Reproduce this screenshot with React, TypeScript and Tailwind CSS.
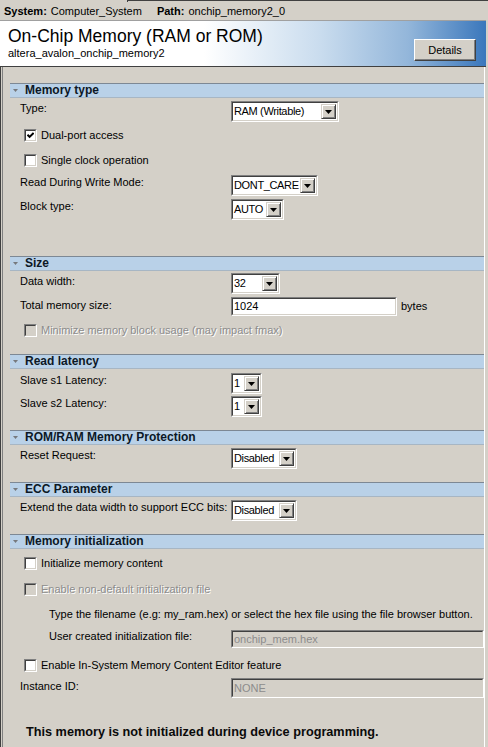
import React from "react";

function DropArrow() {
  return (
    <div className="my-[1px] mr-[1px] flex w-[15px] shrink-0 items-center justify-center border border-t-[#d4d0c8] border-l-[#d4d0c8] border-r-[#404040] border-b-[#404040] bg-[#d4d0c8] shadow-[inset_1px_1px_0_#fff,inset_-1px_-1px_0_#808080]">
      <svg width="7" height="4" viewBox="0 0 7 4">
        <path d="M0 0H7L3.5 4Z" fill="#000" />
      </svg>
    </div>
  );
}

function Select({ value, className }: { value: string; className: string }) {
  return (
    <div className={`flex h-[21px] shrink-0 border border-t-[#808080] border-l-[#808080] border-r-white border-b-white ${className}`}>
      <div className="flex flex-1 border border-t-[#404040] border-l-[#404040] border-r-[#d4d0c8] border-b-[#d4d0c8] bg-white">
        <span className="flex-1 overflow-hidden whitespace-nowrap pl-[1px] text-[11px] leading-[17px] tracking-[-0.35px] text-black">{value}</span>
        <DropArrow />
      </div>
    </div>
  );
}

function TextBox({ value, disabled = false, className }: { value: string; disabled?: boolean; className: string }) {
  return (
    <div className={`flex border border-t-[#808080] border-l-[#808080] border-r-white border-b-white ${className}`}>
      <div
        className={`flex flex-1 items-center border border-t-[#404040] border-l-[#404040] border-r-[#d4d0c8] border-b-[#d4d0c8] pl-[1px] text-[11px] ${
          disabled ? "bg-[#d4d0c8] text-[#8c8c8c]" : "bg-white text-black"
        }`}
      >
        {value}
      </div>
    </div>
  );
}

function Check({ checked = false, disabled = false }: { checked?: boolean; disabled?: boolean }) {
  return (
    <div className="h-[13px] w-[13px] shrink-0 border border-t-[#808080] border-l-[#808080] border-r-white border-b-white">
      <div
        className={`flex h-full w-full items-center justify-center border border-t-[#404040] border-l-[#404040] border-r-[#d4d0c8] border-b-[#d4d0c8] ${
          disabled ? "bg-[#d4d0c8]" : "bg-white"
        }`}
      >
        {checked && (
          <svg width="7" height="7" viewBox="0 0 7 7">
            <path d="M0.5 2.8L2.6 4.9L6.6 0.9" stroke="#000" strokeWidth="2" fill="none" />
          </svg>
        )}
      </div>
    </div>
  );
}

function CheckRow({ label, checked, disabled, className }: { label: string; checked?: boolean; disabled?: boolean; className: string }) {
  return (
    <div className={`flex h-[13px] items-center pl-[21px] ${className}`}>
      <Check checked={checked} disabled={disabled} />
      <span
        className={`ml-[4px] whitespace-nowrap leading-[13px] ${
          disabled ? "text-[#8c8c8c] [text-shadow:1px_1px_0_#fff]" : "text-black"
        }`}
      >
        {label}
      </span>
    </div>
  );
}

function Section({ title, className }: { title: string; className: string }) {
  return (
    <div className={`ml-[7px] flex h-[15px] shrink-0 items-center border-t border-b border-t-[#7d8894] border-b-[#a7b6c4] bg-[#b9d1e8] ${className}`}>
      <svg className="ml-[3px]" width="5" height="3" viewBox="0 0 5 3">
        <path d="M0 0H5L2.5 3Z" fill="#76797d" />
      </svg>
      <span className="ml-[7px] text-[12px] font-bold leading-[13px] text-[#0c1826]">{title}</span>
    </div>
  );
}

function Row({ label, children, className, lead = "leading-[14px]" }: { label: string; children: React.ReactNode; className: string; lead?: string }) {
  return (
    <div className={`flex pl-[17px] ${className}`}>
      <span className={`w-[211px] shrink-0 whitespace-nowrap ${lead}`}>{label}</span>
      {children}
    </div>
  );
}

export default function App() {
  return (
    <div className="flex h-[747px] w-[488px] flex-col overflow-hidden bg-[#d4d0c8] font-['Liberation_Sans',Arial,sans-serif] text-[11px] text-black">
      {/* top path bar */}
      <div className="flex h-[2px] shrink-0">
        <div className="w-[127px]" />
        <div className="flex-1 border-t border-l border-[#404040]" />
      </div>
      <div className="flex h-[18px] shrink-0 items-center pl-[4px] pt-[1px] leading-[13px]">
        <span className="font-bold">System:</span>
        <span className="ml-[4px]">Computer_System</span>
        <span className="ml-[15px] font-bold">Path:</span>
        <span className="ml-[4px]">onchip_memory2_0</span>
      </div>

      {/* header */}
      <div className="mr-[2px] flex h-[47px] shrink-0 justify-between border-t border-b border-t-[#a0a0a0] border-b-[#404040] bg-[linear-gradient(to_right,#ffffff_0%,#ffffff_42%,#c9dcee_66%,#93b6da_84%,#3a77bc_100%)]">
        <div className="flex flex-col pl-[8px] pt-[5px]">
          <span className="text-[17.5px] leading-[21px] text-black">On-Chip Memory (RAM or ROM)</span>
          <span className="text-[11px] leading-[13px] text-black">altera_avalon_onchip_memory2</span>
        </div>
        <div className="mb-[5px] mr-[10px] flex h-[22px] w-[62px] items-center justify-center self-end border border-t-white border-l-white border-r-[#404040] border-b-[#404040] bg-[#d4d0c8] shadow-[inset_-1px_-1px_0_#808080] text-[11px]">
          Details
        </div>
      </div>

      {/* body */}
      <div className="mr-[3px] flex flex-1 border-l border-[#404040] pl-[1px]">
        <div className="flex flex-1 flex-col border-l border-r border-l-[#808080] border-r-white pt-[16px]">
          <Section title="Memory type" className="" />
          <Row label="Type:" className="mt-[3px]">
            <Select value="RAM (Writable)" className="w-[108px]" />
          </Row>
          <CheckRow label="Dual-port access" checked className="mt-[7px]" />
          <CheckRow label="Single clock operation" className="mt-[12px]" />
          <Row label="Read During Write Mode:" className="mt-[8px]">
            <Select value="DONT_CARE" className="w-[87px]" />
          </Row>
          <Row label="Block type:" className="mt-[3px]">
            <Select value="AUTO" className="w-[53px]" />
          </Row>

          <Section title="Size" className="mt-[36px]" />
          <Row label="Data width:" className="mt-[2px]" lead="leading-[16px]">
            <Select value="32" className="w-[49px]" />
          </Row>
          <Row label="Total memory size:" className="mt-[3px]" lead="leading-[16px]">
            <div className="flex items-center">
              <TextBox value="1024" className="h-[19px] w-[166px]" />
              <span className="ml-[4px]">bytes</span>
            </div>
          </Row>
          <CheckRow label="Minimize memory block usage (may impact fmax)" disabled className="mt-[8px]" />

          <Section title="Read latency" className="mt-[17px]" />
          <Row label="Slave s1 Latency:" className="mt-[4px]">
            <Select value="1" className="w-[31px]" />
          </Row>
          <Row label="Slave s2 Latency:" className="mt-[2px]">
            <Select value="1" className="w-[31px]" />
          </Row>

          <Section title="ROM/RAM Memory Protection" className="mt-[13px]" />
          <Row label="Reset Request:" className="mt-[3px]">
            <Select value="Disabled" className="w-[66px]" />
          </Row>

          <Section title="ECC Parameter" className="mt-[13px]" />
          <Row label="Extend the data width to support ECC bits:" className="mt-[3px]">
            <Select value="Disabled" className="w-[66px]" />
          </Row>

          <Section title="Memory initialization" className="mt-[13px]" />
          <CheckRow label="Initialize memory content" className="mt-[8px]" />
          <CheckRow label="Enable non-default initialization file" disabled className="mt-[13px]" />
          <div className="mt-[11px] whitespace-nowrap pl-[46px] leading-[14px]">
            Type the filename (e.g: my_ram.hex) or select the hex file using the file browser button.
          </div>
          <div className="mt-[9px] flex">
            <span className="w-[228px] shrink-0 pl-[46px] leading-[12px]">User created initialization file:</span>
            <TextBox value="onchip_mem.hex" disabled className="h-[18px] flex-1" />
          </div>
          <CheckRow label="Enable In-System Memory Content Editor feature" className="mt-[11px]" />
          <Row label="Instance ID:" className="mt-[6px]" lead="leading-[16px]">
            <TextBox value="NONE" disabled className="h-[20px] flex-1" />
          </Row>

          <div className="mt-[26px] pl-[23px] text-[12.7px] font-bold leading-[16px] text-[#0a0a0a]">
            This memory is not initialized during device programming.
          </div>
        </div>
      </div>
    </div>
  );
}
